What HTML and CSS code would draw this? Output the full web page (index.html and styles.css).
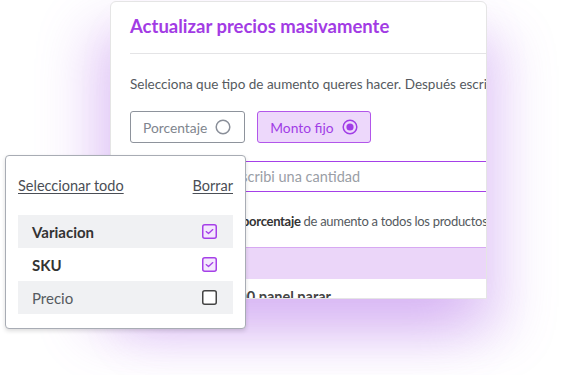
FILE: index.html
```html
<!DOCTYPE html>
<html lang="es">
<head>
<meta charset="utf-8">
<link rel="stylesheet" href="styles.css">
</head>
<body>
<div class="stage">
  <div class="card">
    <div class="card-inner">
      <h1 class="title">Actualizar precios masivamente</h1>
      <hr class="divider">
      <p class="lead">Selecciona que tipo de aumento queres hacer. Después escribí el valor a aplicar.</p>
      <div class="options">
        <div class="option">
          <span>Porcentaje</span>
          <svg class="radio" width="16" height="16" viewBox="0 0 16 16"><circle cx="8" cy="8" r="6.8" fill="none" stroke="#8a8f99" stroke-width="1.5"/></svg>
        </div>
        <div class="option active">
          <span>Monto fijo</span>
          <svg class="radio" width="16" height="16" viewBox="0 0 16 16"><circle cx="8" cy="8" r="6.8" fill="none" stroke="#a13de6" stroke-width="1.5"/><circle cx="8" cy="8" r="3.6" fill="#a13de6"/></svg>
        </div>
      </div>
      <div class="field">
        <span class="prefix">$</span>
        <span class="placeholder">Escribi una cantidad</span>
      </div>
      <p class="info">Se aplicará el mismo <b>porcentaje</b> de aumento a todos los productos seleccionados.</p>
      <div class="band"></div>
      <p class="note">Ejemplo: $ 120.000 panel parar</p>
    </div>
  </div>

  <div class="dropdown">
    <div class="dd-head">
      <a class="link">Seleccionar todo</a>
      <a class="link">Borrar</a>
    </div>
    <ul class="dd-list">
      <li class="dd-row shaded"><span class="strong">Variacion</span>
        <svg width="15" height="15" viewBox="0 0 15 15"><rect x="0.75" y="0.75" width="13.5" height="13.5" rx="2" fill="#f4e8fd" stroke="#a540e8" stroke-width="1.5"/><path d="M4.2 7.6 L6.5 9.6 L10.8 5.6" fill="none" stroke="#a540e8" stroke-width="1.3" stroke-linecap="round" stroke-linejoin="round"/></svg>
      </li>
      <li class="dd-row"><span class="strong">SKU</span>
        <svg width="15" height="15" viewBox="0 0 15 15"><rect x="0.75" y="0.75" width="13.5" height="13.5" rx="2" fill="#f4e8fd" stroke="#a540e8" stroke-width="1.5"/><path d="M4.2 7.6 L6.5 9.6 L10.8 5.6" fill="none" stroke="#a540e8" stroke-width="1.3" stroke-linecap="round" stroke-linejoin="round"/></svg>
      </li>
      <li class="dd-row shaded"><span>Precio</span>
        <svg width="15" height="15" viewBox="0 0 15 15"><rect x="0.75" y="0.75" width="13.5" height="13.5" rx="2" fill="#fff" stroke="#444" stroke-width="1.5"/></svg>
      </li>
    </ul>
  </div>
</div>
</body>
</html>
```

FILE: styles.css
```css
* { box-sizing: border-box; }
html, body { margin: 0; padding: 0; background: #fff; }
body { font-family: Lato, "Noto Sans", sans-serif; color: #555; }

.stage {
  position: relative;
  width: 563px;
  height: 375px;
  overflow: hidden;
  padding: 1px 0 0 110px;
}

.card {
  width: 377px;
  height: 298px;
  border: 1px solid #e5e5e5;
  border-radius: 6px 6px 0 0;
  background: #fff;
  overflow: hidden;
  box-shadow: -18px 30px 55px rgba(170, 95, 230, 0.32), 22px 36px 50px rgba(170, 95, 230, 0.22);
}
.card-inner {
  width: 620px;
  padding: 12px 0 0 19px;
}

.title {
  margin: 0;
  font-size: 18.5px;
  line-height: 24px;
  font-weight: 700;
  color: #a23be4;
}
.divider {
  margin: 15px 0 0;
  border: 0;
  border-top: 1.5px solid #e4e4e6;
}
.lead {
  margin: 20px 0 0;
  font-size: 13.5px;
  line-height: 20px;
  color: #555a60;
  white-space: nowrap;
}

.options {
  display: flex;
  gap: 12px;
  margin-top: 17px;
}
.option {
  display: flex;
  align-items: center;
  gap: 8px;
  height: 32px;
  padding: 0 13px 0 12px;
  border: 1px solid #8e939c;
  border-radius: 3px;
  font-size: 13.8px;
  color: #80858e;
}
.option.active {
  padding-right: 12px;
  background: #edd8fb;
  border-color: #b256ea;
  color: #a13de6;
}
.radio { display: block; }

.field {
  display: flex;
  align-items: center;
  height: 31px;
  margin-top: 18px;
  border: 1.5px solid #a540e8;
  border-radius: 3px;
  font-size: 14.5px;
}
.prefix {
  width: 92px;
  padding-left: 12px;
  color: #555;
}
.placeholder {
  padding-left: 10px;
  color: #9a9ea6;
}

.info {
  margin: 19px 0 0;
  font-size: 13px;
  line-height: 20px;
  letter-spacing: -0.3px;
  color: #555a60;
  white-space: nowrap;
}
.info b { color: #333; font-weight: 700; }

.band {
  height: 32px;
  margin-top: 16px;
  margin-left: -19px;
  background: #ebd6f9;
  border-top: 1px solid #d7a9f2;
}
.note {
  margin: 8px 0 0;
  font-size: 14.5px;
  line-height: 20px;
  font-weight: 700;
  color: #444;
  white-space: nowrap;
}

.dropdown {
  position: absolute;
  left: 5px;
  top: 155px;
  width: 241px;
  height: 174px;
  padding: 20px 12px 0 12px;
  background: #fff;
  border: 1px solid #a8acb4;
  border-radius: 4px;
  box-shadow: 0 2px 4px rgba(0, 0, 0, 0.14);
}
.dd-head {
  display: flex;
  justify-content: space-between;
  line-height: 20px;
  font-size: 14.5px;
}
.link {
  color: #4a4e55;
  text-decoration: underline;
  text-underline-offset: 2px;
}
.dd-list {
  list-style: none;
  margin: 19px 0 0;
  padding: 0;
}
.dd-row {
  display: flex;
  align-items: center;
  justify-content: space-between;
  height: 33px;
  padding: 0 16px 0 14px;
  font-size: 15px;
  color: #555a60;
}
.dd-row.shaded { background: #f0f1f3; }
.dd-row svg { display: block; }
.strong { font-weight: 700; color: #333; }
```
